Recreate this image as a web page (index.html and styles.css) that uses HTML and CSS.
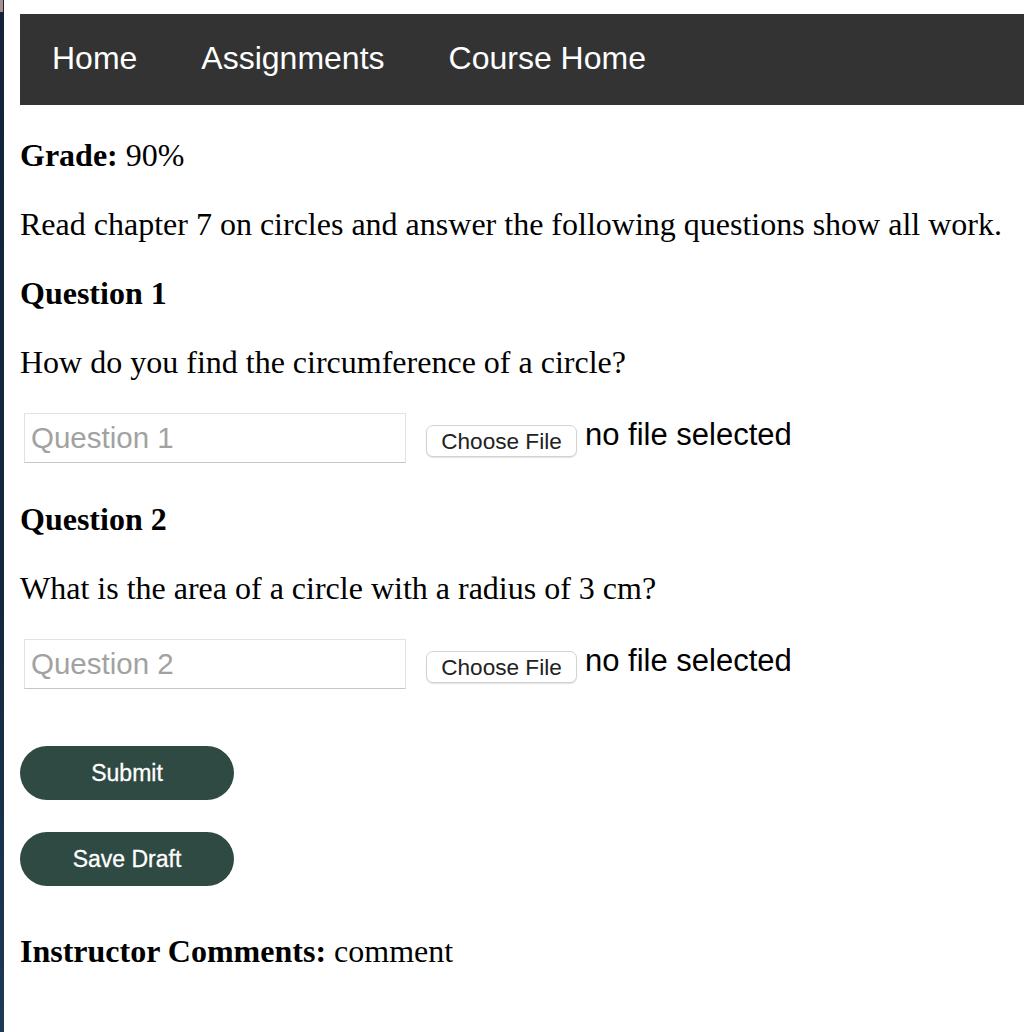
FILE: index.html
```html
<!DOCTYPE html>
<html lang="en">
<head>
<meta charset="utf-8">
<title>Assignment</title>
<link rel="stylesheet" href="styles.css">
</head>
<body>
<nav class="topnav">
  <a class="topnav-link" href="#">Home</a>
  <a class="topnav-link" href="#">Assignments</a>
  <a class="topnav-link" href="#">Course Home</a>
</nav>
<main class="content">
  <p class="line"><strong>Grade:</strong> 90%</p>
  <p class="line">Read chapter 7 on circles and answer the following questions show all work.</p>
  <p class="line"><strong>Question 1</strong></p>
  <p class="line">How do you find the circumference of a circle?</p>
  <div class="answer-row">
    <input class="answer" type="text" placeholder="Question 1">
    <span class="file-btn">Choose File</span>
    <span class="file-name">no file selected</span>
  </div>
  <p class="line"><strong>Question 2</strong></p>
  <p class="line">What is the area of a circle with a radius of 3 cm?</p>
  <div class="answer-row">
    <input class="answer" type="text" placeholder="Question 2">
    <span class="file-btn">Choose File</span>
    <span class="file-name">no file selected</span>
  </div>
  <div class="actions">
    <button class="btn" type="button">Submit</button>
    <button class="btn" type="button">Save Draft</button>
  </div>
  <p class="line"><strong>Instructor Comments:</strong> comment</p>
</main>
</body>
</html>
```
FILE: styles.css
```css
html {
  height: 100%;
  background:
    linear-gradient(#a88f8f, #a88f8f) 0 0 / 3px 12px no-repeat,
    linear-gradient(to bottom, #13223a 0%, #15273f 60%, #1e3a55 100%) 0 0 / 4px 100% no-repeat,
    #ffffff;
}

body {
  margin: 0;
  padding: 14px 0 0 20px;
  font-family: "Liberation Serif", "Times New Roman", serif;
  color: #000;
}

.topnav {
  display: flex;
  background: #333333;
}

.topnav-link {
  display: block;
  padding: 26px 32px 28px;
  font-family: "Liberation Sans", Arial, sans-serif;
  font-size: 32px;
  line-height: 37px;
  color: #ffffff;
  text-decoration: none;
}

.content {
  display: flow-root;
}

.line {
  margin: 32px 0;
  font-size: 32px;
  line-height: 37px;
}

.answer-row {
  display: flex;
  align-items: flex-start;
  height: 56px;
  margin: 32px 0;
}

.answer {
  box-sizing: border-box;
  width: 382px;
  height: 50px;
  margin: 0 0 0 4px;
  padding: 0 6px;
  border: 1px solid #e2e2e2;
  border-bottom-color: #c6c6c6;
  border-radius: 0;
  font-family: "Liberation Sans", Arial, sans-serif;
  font-size: 29.5px;
  color: #000;
  background: #fff;
  outline: none;
}

.answer::placeholder {
  color: #a2a2a2;
}

.file-btn {
  box-sizing: border-box;
  display: flex;
  align-items: center;
  justify-content: center;
  width: 151px;
  height: 32px;
  margin: 12px 0 0 20px;
  padding-top: 2px;
  border: 1px solid #d3d3d3;
  border-radius: 7px;
  background: #ffffff;
  box-shadow: 0 1px 1px rgba(0, 0, 0, 0.12);
  font-family: "Liberation Sans", Arial, sans-serif;
  font-size: 22.6px;
  color: #222222;
}

.file-name {
  margin: 4px 0 0 8px;
  font-family: "Liberation Sans", Arial, sans-serif;
  font-size: 31px;
  line-height: 36px;
  color: #000;
}

.actions {
  display: flex;
  flex-direction: column;
  align-items: flex-start;
  gap: 32px;
  margin: 51px 0 47px;
}

.btn {
  width: 214px;
  height: 54px;
  border: none;
  border-radius: 27px;
  background: #2e4a42;
  color: #ffffff;
  font-family: "Liberation Sans", Arial, sans-serif;
  font-size: 23px;
  font-weight: 500;
  -webkit-text-stroke: 0.3px #ffffff;
  padding: 0;
  cursor: pointer;
}
```
